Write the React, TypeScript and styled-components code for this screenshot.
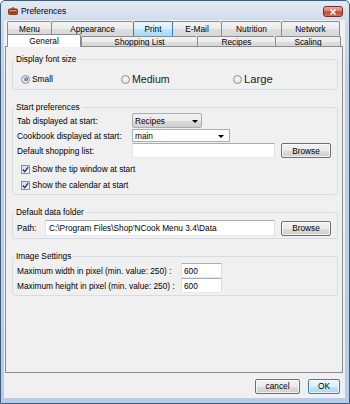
import React from "react";
import styled, { createGlobalStyle, css } from "styled-components";

const Global = createGlobalStyle`
  html, body { margin: 0; padding: 0; background: #ffffff; }
  body { font-family: "Liberation Sans", Arial, sans-serif; font-size: 8.3px; color: #000; }
  * { box-sizing: border-box; }
  fieldset { margin: 0; }
`;

const Window = styled.div`
  width: 350px;
  height: 404px;
  border: 1px solid #3f5d7e;
  border-radius: 5px 5px 0 0;
  background: linear-gradient(180deg, #e3eaf3 0px, #cfdcec 20px, #bcd1e9 80px, #b7cde7 100%);
  display: flex;
  flex-direction: column;
  overflow: hidden;
`;

const TitleBar = styled.div`
  height: 19px;
  flex-shrink: 0;
  display: flex;
  align-items: center;
  gap: 3px;
  padding-left: 7px;
`;

const TitleText = styled.span`
  font-size: 8.4px;
  color: #000;
  padding-top: 1px;
`;

const CloseButton = styled.div`
  margin-left: auto;
  margin-right: 6px;
  align-self: flex-start;
  margin-top: 5px;
  width: 20px;
  height: 11px;
  border: 1px solid #7a2e23;
  border-radius: 3px;
  background: linear-gradient(180deg, #eab0a3 0%, #d97b68 45%, #c5452f 55%, #d9705a 100%);
  display: flex;
  align-items: center;
  justify-content: center;
`;

const Client = styled.div`
  flex: 1;
  margin: 0 4px 5px 3px;
  background: #f0f0f0;
  display: flex;
  flex-direction: column;
  padding: 1px 2px 0 1px;
`;

const TabStrip = styled.div`
  display: flex;
  flex-direction: column;
  padding-left: 2px;
`;

const TabRow = styled.div<{ $front?: boolean }>`
  display: flex;
  align-items: flex-start;
  height: ${(p) => (p.$front ? 12 : 15)}px;
  ${(p) => p.$front && css`margin-top: -2px;`}
`;

const Tab = styled.div<{ $w: number; $selected?: boolean; $hover?: boolean; $last?: boolean }>`
  width: ${(p) => p.$w}px;
  height: 15px;
  display: flex;
  align-items: center;
  justify-content: center;
  border: 1px solid #898c95;
  border-bottom: none;
  border-right: ${(p) => (p.$last ? "1px solid #898c95" : "none")};
  border-radius: 2px 2px 0 0;
  background: linear-gradient(180deg, #f4f4f4 0%, #ebebeb 50%, #dedede 51%, #d8d8d8 100%);
  color: #000;
  white-space: nowrap;
  ${(p) =>
    p.$hover &&
    css`
      background: linear-gradient(180deg, #eaf6fd 0%, #d9f0fc 50%, #bee6fd 51%, #a7d9f5 100%);
      border-color: #3c7fb1;
      border-right: 1px solid #3c7fb1;
      margin-right: -1px;
      position: relative;
    `}
  ${(p) =>
    p.$selected &&
    css`
      height: 13px;
      background: #ffffff;
      border-right: 1px solid #898c95;
      position: relative;
      z-index: 1;
    `}
  ${(p) =>
    !p.$selected &&
    css`
      ${TabRow}[data-front="1"] & {
        height: 10px;
        margin-top: 2px;
        padding-top: 1px;
      }
    `}
`;

const Panel = styled.div`
  height: 327px;
  flex-shrink: 0;
  border: 1px solid #898c95;
  background: #f0f0f0;
  padding: 7px 4px 0 6px;
  display: flex;
  flex-direction: column;
  gap: 12px;
`;

const Group = styled.fieldset`
  border: 1px solid #d7dce2;
  border-radius: 3px;
  padding: 0;
  min-width: 0;
`;

const Legend = styled.legend`
  padding: 0 2px;
  margin-left: 1px;
  line-height: 10px;
  height: 10px;
  color: #000;
`;

const GroupBody = styled.div<{ $pt: number; $pb: number }>`
  padding: ${(p) => p.$pt}px 5px ${(p) => p.$pb}px 4px;
  display: flex;
  flex-direction: column;
`;

const Row = styled.div<{ $h: number; $mt?: number; $pl?: number }>`
  display: flex;
  align-items: center;
  height: ${(p) => p.$h}px;
  margin-top: ${(p) => p.$mt ?? 0}px;
  padding-left: ${(p) => p.$pl ?? 0}px;
`;

const Label = styled.span<{ $w?: number }>`
  width: ${(p) => (p.$w ? `${p.$w}px` : "auto")};
  flex-shrink: 0;
  white-space: nowrap;
`;

const RadioItem = styled.div<{ $w?: number }>`
  display: flex;
  align-items: center;
  gap: 2px;
  width: ${(p) => (p.$w ? `${p.$w}px` : "auto")};
`;

const RadioCircle = styled.span<{ $on?: boolean }>`
  width: 9px;
  height: 9px;
  border-radius: 50%;
  border: 1px solid #8e9297;
  background: radial-gradient(circle at 50% 40%, #f8f8f8 0%, #e6e6e6 60%, #d4d4d4 100%);
  display: flex;
  align-items: center;
  justify-content: center;
  flex-shrink: 0;
  &::after {
    content: "";
    display: ${(p) => (p.$on ? "block" : "none")};
    width: 4px;
    height: 4px;
    border-radius: 50%;
    background: radial-gradient(circle at 40% 35%, #8fd0f5 0%, #2a74b8 60%, #164c86 100%);
  }
`;

const RadioText = styled.span<{ $size: number }>`
  font-size: ${(p) => p.$size}px;
  color: ${(p) => (p.$size > 9 ? "#222" : "#000")};
`;

const TextField = styled.div<{ $w: number; $h?: number; $pl?: number }>`
  width: ${(p) => p.$w}px;
  height: ${(p) => p.$h ?? 15}px;
  flex-shrink: 0;
  background: #ffffff;
  border: 1px solid;
  border-color: #abadb3 #dbdfe6 #e3e9ef #e2e3ea;
  display: flex;
  align-items: center;
  padding-left: ${(p) => p.$pl ?? 2}px;
  white-space: nowrap;
  overflow: hidden;
`;

const Combo = styled.div<{ $w: number; $h: number; $editable?: boolean; $arrowRight: number }>`
  width: ${(p) => p.$w}px;
  height: ${(p) => p.$h}px;
  flex-shrink: 0;
  display: flex;
  align-items: center;
  justify-content: space-between;
  padding: 0 ${(p) => p.$arrowRight}px 0 2px;
  border: 1px solid ${(p) => (p.$editable ? "#abadb3" : "#acacac")};
  border-radius: ${(p) => (p.$editable ? 0 : 2)}px;
  background: ${(p) =>
    p.$editable
      ? "#ffffff"
      : "linear-gradient(180deg, #f2f2f2 0%, #ebebeb 50%, #dddddd 51%, #cfcfcf 100%)"};
`;

const Arrow = styled.span`
  width: 0;
  height: 0;
  border-left: 3px solid transparent;
  border-right: 3px solid transparent;
  border-top: 3px solid #000;
  margin-top: 1px;
`;

const Button = styled.div<{ $w: number; $default?: boolean }>`
  width: ${(p) => p.$w}px;
  height: 15px;
  flex-shrink: 0;
  display: flex;
  align-items: center;
  justify-content: center;
  border: 1px solid ${(p) => (p.$default ? "#3c7fb1" : "#707070")};
  border-radius: 2px;
  background: ${(p) =>
    p.$default
      ? "linear-gradient(180deg, #eaf6fd 0%, #d9f0fc 50%, #bee6fd 51%, #a7d9f5 100%)"
      : "linear-gradient(180deg, #f2f2f2 0%, #ebebeb 50%, #dddddd 51%, #cfcfcf 100%)"};
  box-shadow: inset 0 0 0 1px rgba(255, 255, 255, 0.7);
  color: #000;
`;

const Gap = styled.span<{ $w: number }>`
  width: ${(p) => p.$w}px;
  flex-shrink: 0;
`;

const CheckBox = styled.span`
  width: 9px;
  height: 9px;
  flex-shrink: 0;
  border: 1px solid #8e8f8f;
  background: linear-gradient(135deg, #d4d8de 0%, #eef0f3 60%, #f8f8f8 100%);
  display: flex;
  align-items: center;
  justify-content: center;
`;

const CheckItem = styled.div`
  display: flex;
  align-items: center;
  gap: 2px;
`;

const ButtonBar = styled.div`
  flex: 1;
  display: flex;
  align-items: center;
  justify-content: flex-end;
  gap: 8px;
  padding: 1px 3px 0 0;
`;

const AppIcon = () => (
  <svg width="10" height="9" viewBox="0 0 10 9">
    <path d="M3 3 Q5 0 7 3" fill="none" stroke="#7a3a1c" strokeWidth="1" />
    <rect x="0.5" y="3" width="9" height="5.5" rx="1" fill="#b4492a" stroke="#6e2a14" strokeWidth="0.8" />
    <rect x="1.5" y="4" width="7" height="1.3" fill="#e08a4a" />
    <rect x="2" y="6" width="6" height="1" fill="#8a3418" />
  </svg>
);

const CheckMark = () => (
  <svg width="7" height="7" viewBox="0 0 7 7">
    <path d="M0.8 3.6 L2.8 5.6 L6.2 1" fill="none" stroke="#21399a" strokeWidth="1.4" />
  </svg>
);

const CloseX = () => (
  <svg width="8" height="6" viewBox="0 0 8 6">
    <path d="M1.5 0.5 L6.5 5.5 M6.5 0.5 L1.5 5.5" stroke="#ffffff" strokeWidth="1.5" />
  </svg>
);

const backTabs = [
  { t: "Menu", w: 44 },
  { t: "Appearance", w: 82 },
  { t: "Print", w: 40, hover: true },
  { t: "E-Mail", w: 49 },
  { t: "Nutrition", w: 60 },
  { t: "Network", w: 59 },
];

const frontTabs = [
  { t: "General", w: 74, selected: true },
  { t: "Shopping List", w: 116 },
  { t: "Recipes", w: 78 },
  { t: "Scaling", w: 66 },
];

export default function App() {
  return (
    <>
      <Global />
      <Window>
        <TitleBar>
          <AppIcon />
          <TitleText>Preferences</TitleText>
          <CloseButton>
            <CloseX />
          </CloseButton>
        </TitleBar>
        <Client>
          <TabStrip>
            <TabRow>
              {backTabs.map((b, i) => (
                <Tab key={b.t} $w={b.w} $hover={b.hover} $last={i === backTabs.length - 1}>
                  {b.t}
                </Tab>
              ))}
            </TabRow>
            <TabRow $front data-front="1">
              {frontTabs.map((b, i) => (
                <Tab key={b.t} $w={b.w} $selected={b.selected} $last={i === frontTabs.length - 1}>
                  {b.t}
                </Tab>
              ))}
            </TabRow>
          </TabStrip>
          <Panel>
            <Group>
              <Legend>Display font size</Legend>
              <GroupBody $pt={7} $pb={2}>
                <Row $h={16} $pl={4}>
                  <RadioItem $w={100}>
                    <RadioCircle $on />
                    <RadioText $size={8.4}>Small</RadioText>
                  </RadioItem>
                  <RadioItem $w={112}>
                    <RadioCircle />
                    <RadioText $size={10.6}>Medium</RadioText>
                  </RadioItem>
                  <RadioItem>
                    <RadioCircle />
                    <RadioText $size={11.3}>Large</RadioText>
                  </RadioItem>
                </Row>
              </GroupBody>
            </Group>

            <Group>
              <Legend>Start preferences</Legend>
              <GroupBody $pt={1} $pb={1}>
                <Row $h={15}>
                  <Label $w={115}>Tab displayed at start:</Label>
                  <Combo $w={70} $h={15} $arrowRight={3}>
                    <span>Recipes</span>
                    <Arrow />
                  </Combo>
                </Row>
                <Row $h={13} $mt={1}>
                  <Label $w={115}>Cookbook displayed at start:</Label>
                  <Combo $w={98} $h={13} $editable $arrowRight={5}>
                    <span>main</span>
                    <Arrow />
                  </Combo>
                </Row>
                <Row $h={15} $mt={1}>
                  <Label $w={115}>Default shopping list:</Label>
                  <TextField $w={143} />
                  <Gap $w={6} />
                  <Button $w={50}>Browse</Button>
                </Row>
                <Row $h={16} $mt={3} $pl={4}>
                  <CheckItem>
                    <CheckBox>
                      <CheckMark />
                    </CheckBox>
                    <span>Show the tip window at start</span>
                  </CheckItem>
                </Row>
                <Row $h={16} $pl={4}>
                  <CheckItem>
                    <CheckBox>
                      <CheckMark />
                    </CheckBox>
                    <span>Show the calendar at start</span>
                  </CheckItem>
                </Row>
              </GroupBody>
            </Group>

            <Group>
              <Legend>Default data folder</Legend>
              <GroupBody $pt={3} $pb={2}>
                <Row $h={16}>
                  <Label $w={28}>Path:</Label>
                  <TextField $w={230} $h={16} $pl={3}>
                    C:\Program Files\Shop'NCook Menu 3.4\Data
                  </TextField>
                  <Gap $w={6} />
                  <Button $w={50}>Browse</Button>
                </Row>
              </GroupBody>
            </Group>

            <Group>
              <Legend>Image Settings</Legend>
              <GroupBody $pt={2} $pb={2}>
                <Row $h={15}>
                  <Label $w={164}>Maximum width in pixel (min. value: 250) :</Label>
                  <TextField $w={41}>600</TextField>
                </Row>
                <Row $h={15}>
                  <Label $w={164}>Maximum height in pixel (min. value: 250) :</Label>
                  <TextField $w={41}>600</TextField>
                </Row>
              </GroupBody>
            </Group>
          </Panel>
          <ButtonBar>
            <Button $w={45}>cancel</Button>
            <Button $w={32} $default>
              OK
            </Button>
          </ButtonBar>
        </Client>
      </Window>
    </>
  );
}
